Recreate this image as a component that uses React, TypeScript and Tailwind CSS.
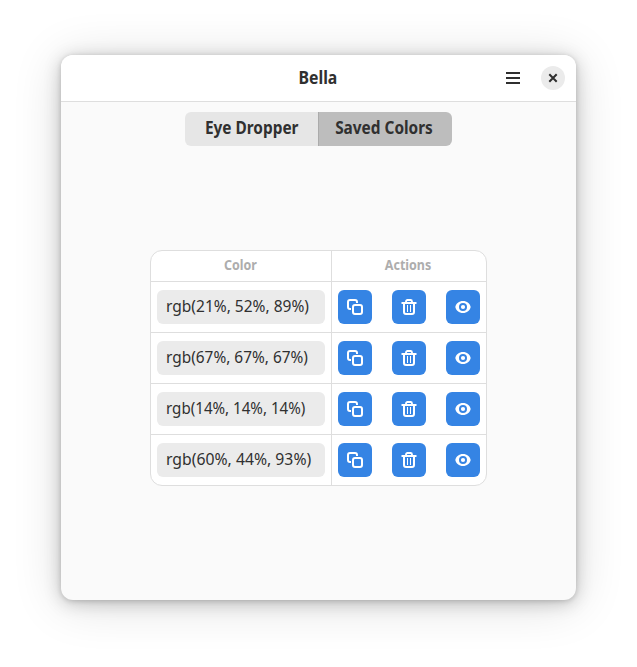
import React from "react";

const colors = [
  { label: "rgb(21%, 52%, 89%)", scale: "scale-x-[0.97]" },
  { label: "rgb(67%, 67%, 67%)", scale: "scale-x-[0.963]" },
  { label: "rgb(14%, 14%, 14%)", scale: "scale-x-[0.945]" },
  { label: "rgb(60%, 44%, 93%)", scale: "scale-x-[0.985]" },
];

function CopyIcon() {
  return (
    <svg width="16" height="16" viewBox="0 0 16 16" fill="none" stroke="white" strokeWidth="2">
      <path d="M4 10H3a2 2 0 0 1-2-2V3a2 2 0 0 1 2-2h5a2 2 0 0 1 2 2v1" />
      <rect x="6" y="6" width="9" height="9" rx="2" />
    </svg>
  );
}

function TrashIcon() {
  return (
    <svg width="16" height="16" viewBox="0 0 16 16" fill="none" stroke="white">
      <path d="M0.5 4h15" strokeWidth="2" />
      <path d="M5 4V2.5A1.5 1.5 0 0 1 6.500 1h3A1.500 1.500 0 0 1 11 2.500V4" strokeWidth="1.800" />
      <path d="M3 4v9a2 2 0 0 0 2 2h6a2 2 0 0 0 2-2V4" strokeWidth="2" />
      <path d="M6.500 6v7M9.500 6v7" strokeWidth="1" />
    </svg>
  );
}

function EyeIcon() {
  return (
    <svg width="16" height="16" viewBox="0 0 16 16" fill="white">
      <path
        fillRule="evenodd"
        d="M8 2C4 2 1.100 4.500.3 8c.8 3.500 3.700 6 7.700 6s6.900-2.500 7.700-6C14.900 4.500 12 2 8 2Zm0 2a4 4 0 1 1 0 8 4 4 0 0 1 0-8Z"
      />
      <circle cx="8" cy="8" r="2.100" />
    </svg>
  );
}

function Action({ label, children }: { label: string; children: React.ReactNode }) {
  return (
    <button aria-label={label} className="flex size-[34px] items-center justify-center rounded-[6px] bg-[#3584e4]">
      {children}
    </button>
  );
}

export default function App() {
  return (
    <div className="h-[667px] w-[637px] overflow-hidden bg-white pl-[61px] pt-[55px] font-['Noto_Sans',sans-serif] text-[#303030]">
      <main className="flex h-[545px] w-[515px] flex-col items-center rounded-[12px] bg-[#fafafa] shadow-[0_1px_5px_rgba(0,0,0,0.16),0_3px_18px_rgba(0,0,0,0.20),0_4px_50px_rgba(0,0,0,0.14)]">
        <header className="flex h-[47px] w-full items-center justify-end rounded-t-[12px] border-b border-[#dedede] bg-white pr-[11px]">
          <div className="mr-[148px] flex w-[80px] justify-center">
            <h1 className="scale-x-[0.93] text-[17px] font-bold leading-6">Bella</h1>
          </div>
          <div className="mr-[21px] flex h-[12px] w-[14px] flex-col justify-between">
            <i className="h-[2px] bg-[#2f2f2f]" />
            <i className="h-[2px] bg-[#2f2f2f]" />
            <i className="h-[2px] bg-[#2f2f2f]" />
          </div>
          <button aria-label="Close" className="flex size-6 items-center justify-center rounded-full bg-[#ebebeb]">
            <svg width="10" height="10" viewBox="0 0 10 10" stroke="#2f2f2f" strokeWidth="2">
              <path d="m1.300 1.300 7.400 7.400m0-7.400L1.300 8.700" />
            </svg>
          </button>
        </header>
        <nav className="mt-[10px] flex h-[34px] w-[267px] overflow-hidden rounded-[6px] text-[17px] font-bold">
          <button className="flex w-[133px] items-center justify-center bg-[#e6e6e6] pb-[2px]">
            <span className="scale-x-[0.905] whitespace-nowrap">Eye Dropper</span>
          </button>
          <button className="flex flex-1 items-center justify-center border-l border-[#ababab] bg-[#bdbdbd] pb-[2px] pr-[3px]">
            <span className="scale-x-[0.905] whitespace-nowrap">Saved Colors</span>
          </button>
        </nav>
        <section className="mt-[104px] w-[337px] overflow-hidden rounded-[12px] border border-[#dedede] bg-white">
          <div className="flex h-[30px] text-[14px] font-bold text-[#adadad]">
            <div className="flex w-[181px] items-center justify-center border-r border-[#dedede] pb-[3px] pr-px">
              <span className="scale-x-[0.89]">Color</span>
            </div>
            <div className="flex flex-1 items-center justify-center pb-[3px] pr-[2px]">
              <span className="scale-x-[0.893]">Actions</span>
            </div>
          </div>
          {colors.map((c) => (
            <div key={c.label} className="flex h-[51px] border-t border-[#dedede]">
              <div className="w-[181px] border-r border-[#dedede] pl-[6px] pt-[8px]">
                <div className="flex h-[34px] w-[168px] items-center rounded-[6px] bg-[#ebebeb] pb-[2px] pl-[9px] text-[16px]">
                  <span className={"origin-left whitespace-nowrap " + c.scale}>{c.label}</span>
                </div>
              </div>
              <div className="flex flex-1 justify-between px-[6px] pt-[8px]">
                <Action label="Copy"><CopyIcon /></Action>
                <Action label="Delete"><TrashIcon /></Action>
                <Action label="View"><EyeIcon /></Action>
              </div>
            </div>
          ))}
        </section>
      </main>
    </div>
  );
}
